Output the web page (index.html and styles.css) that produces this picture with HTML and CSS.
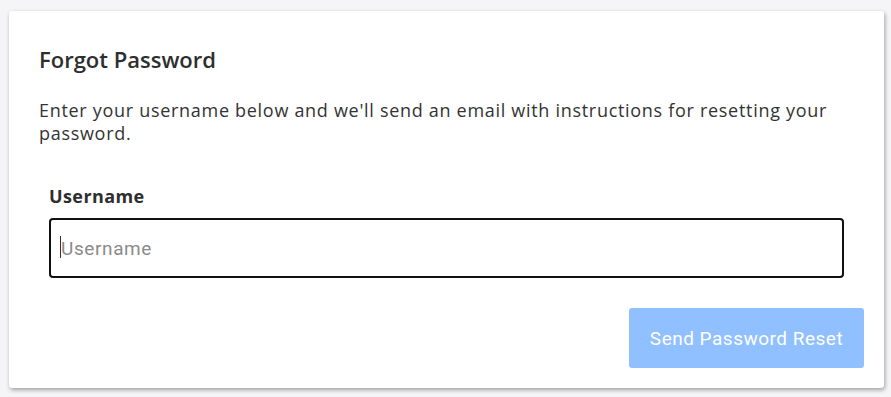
FILE: index.html
```html
<!DOCTYPE html>
<html lang="en">
<head>
<meta charset="utf-8">
<title>Forgot Password</title>
<link rel="stylesheet" href="styles.css">
</head>
<body>
<main class="card">
  <h2 class="title">Forgot Password</h2>
  <p class="intro">Enter your username below and we'll send an email with instructions for resetting your password.</p>
  <form class="form">
    <div class="field">
      <label class="label" for="username">Username</label>
      <div class="input-wrap">
        <input class="input" id="username" type="text" placeholder="Username">
        <span class="caret"></span>
      </div>
    </div>
    <div class="actions">
      <button class="btn" type="button">Send Password Reset</button>
    </div>
  </form>
</main>
</body>
</html>
```

FILE: styles.css
```css
html, body {
  margin: 0;
  padding: 0;
}
body {
  background: #f5f5f7;
  padding: 11px 7px 9px 9px;
  font-family: "Open Sans", "DejaVu Sans", sans-serif;
  color: #2e2e2e;
}
.card {
  box-sizing: border-box;
  width: 875px;
  height: 377px;
  background: #ffffff;
  border-radius: 3px;
  box-shadow: 1px 2px 4px rgba(0, 0, 0, 0.35);
  padding: 34px 20px 20px 30px;
}
.title {
  margin: 0;
  font-size: 22px;
  line-height: 28px;
  font-weight: 600;
}
.intro {
  margin: 26px 0 0 0;
  font-size: 18px;
  line-height: 23px;
  letter-spacing: 0.7px;
  font-weight: 400;
  color: #333;
}
.form {
  margin-top: 39px;
}
.field {
  display: flex;
  flex-direction: column;
  gap: 10px;
  padding: 0 20px 0 10px;
}
.label {
  font-size: 18px;
  line-height: 24px;
  font-weight: 700;
  letter-spacing: 0.4px;
}
.input-wrap {
  position: relative;
}
.input {
  display: block;
  box-sizing: border-box;
  height: 60px;
  width: 100%;
  border: 2px solid #111;
  border-radius: 4px;
  padding: 0 10px;
  font-family: Roboto, "Liberation Sans", sans-serif;
  font-size: 19px;
  letter-spacing: 0.6px;
  outline: none;
}
.input::placeholder {
  color: #8a8a8a;
}
.caret {
  position: absolute;
  left: 11px;
  top: 18px;
  width: 1px;
  height: 22px;
  background: #333;
}
.actions {
  display: flex;
  justify-content: flex-end;
  margin-top: 30px;
}
.btn {
  box-sizing: border-box;
  width: 235px;
  height: 60px;
  border: none;
  border-radius: 3px;
  background: #90c0ff;
  color: #ffffff;
  font-family: Roboto, "Liberation Sans", sans-serif;
  font-size: 19px;
  letter-spacing: 0.5px;
  padding: 0;
}
```
